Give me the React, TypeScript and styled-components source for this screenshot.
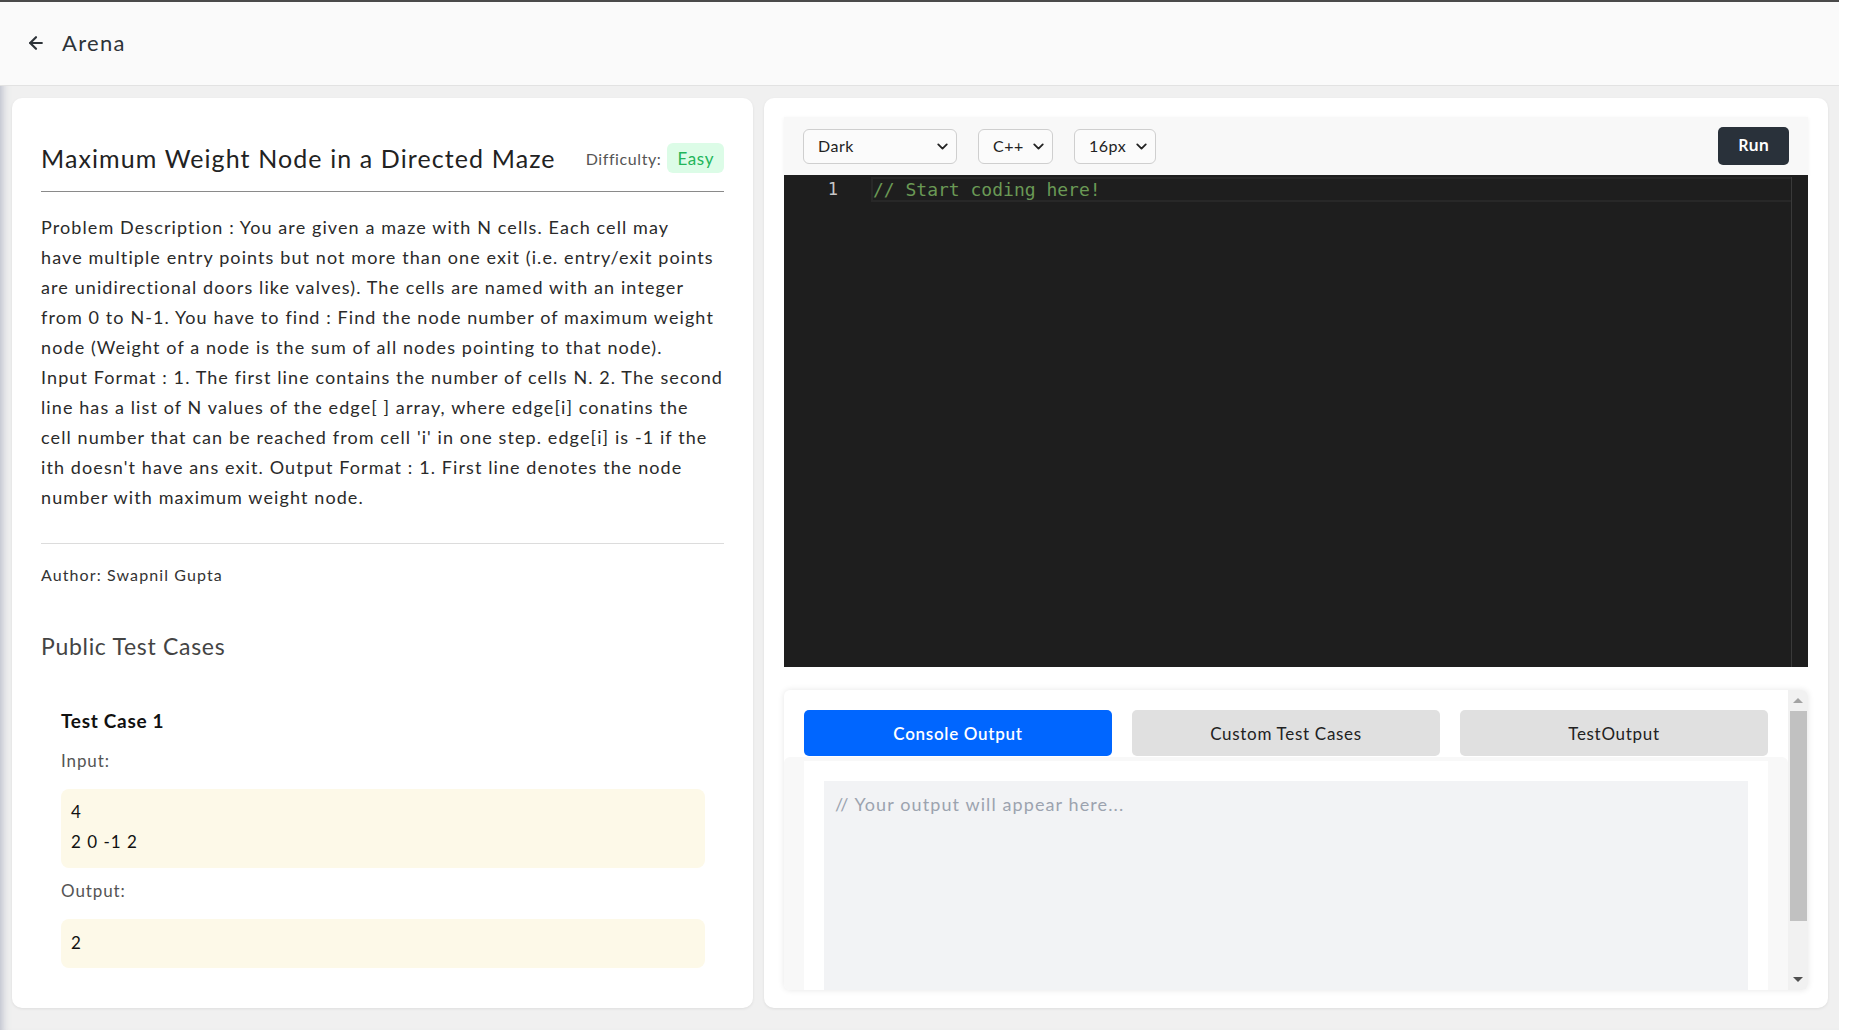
import React from "react";
import styled, { createGlobalStyle } from "styled-components";
import { ArrowLeft, ChevronDown } from "lucide-react";

const SANS = `"Lato", "Noto Sans", sans-serif`;
const MONO = `"DejaVu Sans Mono", "Liberation Mono", monospace`;

const GlobalStyle = createGlobalStyle`
  html, body { margin: 0; padding: 0; background: #ffffff; }
  body { font-family: ${SANS}; color: #222; }
  * { box-sizing: border-box; }
`;

const Page = styled.div`
  width: calc(100% - 10px);
  height: 1030px;
  background: #f0f0f0;
  border-top: 2px solid #4a4a4a;
  box-shadow: inset 10px 0 8px -8px rgba(110, 120, 150, 0.45);
  display: flex;
  flex-direction: column;
  overflow: hidden;
`;

const Header = styled.header`
  height: 84px;
  flex: none;
  background: #fafafa;
  border-bottom: 1px solid #e2e2e2;
  display: flex;
  align-items: center;
  gap: 16px;
  padding-left: 26px;
  padding-bottom: 2px;
  color: #2d3338;
`;

const HeaderTitle = styled.span`
  font-size: 22px;
  letter-spacing: 1.3px;
`;

const Main = styled.main`
  display: flex;
  gap: 11px;
  padding: 12px 11px 0 12px;
`;

const Card = styled.section<{ $w?: number }>`
  ${(p) => (p.$w ? `width: ${p.$w}px; flex: none;` : "flex: 1;")}
  height: 910px;
  background: #ffffff;
  border-radius: 10px;
  box-shadow: 0 1px 3px rgba(0, 0, 0, 0.08);
  display: flex;
  flex-direction: column;
`;

const ProblemCard = styled(Card)`
  padding: 45px 29px 0 29px;
`;

const EditorCard = styled(Card)`
  padding: 19px 20px 18px 20px;
`;

const TitleRow = styled.div`
  display: flex;
  align-items: center;
  justify-content: space-between;
  height: 30px;
`;

const Title = styled.h1`
  margin: 0;
  font-size: 25px;
  font-weight: 400;
  letter-spacing: 1.1px;
  color: #222;
`;

const DifficultyWrap = styled.div`
  display: flex;
  align-items: center;
  gap: 6px;
  font-size: 16px;
  letter-spacing: 0.6px;
  color: #555;
`;

const Badge = styled.span`
  height: 30px;
  display: inline-flex;
  align-items: center;
  padding: 0 10px;
  border-radius: 6px;
  background: #dcfce7;
  color: #22b55a;
  font-size: 17px;
  letter-spacing: 0.6px;
`;

const Divider = styled.hr<{ $dark?: boolean; $mt: number }>`
  margin: ${(p) => p.$mt}px 0 0 0;
  border: none;
  height: 1px;
  background: ${(p) => (p.$dark ? "#8a8a8a" : "#dcdcdc")};
`;

const Description = styled.p`
  margin: 20px 0 0 0;
  font-size: 18px;
  line-height: 30px;
  letter-spacing: 1.1px;
  color: #2a2a2a;
`;

const DescLine = styled.span`
  display: block;
  white-space: nowrap;
`;

const Author = styled.div`
  margin-top: 21px;
  font-size: 16px;
  line-height: 20px;
  letter-spacing: 1.1px;
  color: #333;
`;

const SectionTitle = styled.h2`
  margin: 46px 0 0 0;
  font-size: 23px;
  line-height: 30px;
  font-weight: 400;
  letter-spacing: 0.7px;
  color: #444;
`;

const TestCase = styled.div`
  margin-top: 48px;
  padding: 0 19px 0 20px;
  display: flex;
  flex-direction: column;
`;

const TestCaseTitle = styled.h3`
  margin: 0;
  font-size: 19px;
  line-height: 24px;
  font-weight: 700;
  letter-spacing: 0.7px;
  color: #111;
`;

const IOLabel = styled.div<{ $mt: number }>`
  margin-top: ${(p) => p.$mt}px;
  font-size: 17px;
  line-height: 24px;
  letter-spacing: 0.9px;
  color: #555;
`;

const IOBox = styled.pre<{ $pad: string }>`
  margin: 16px 0 0 0;
  padding: ${(p) => p.$pad};
  background: #fdf9e8;
  border-radius: 8px;
  font-family: ${SANS};
  font-size: 17px;
  line-height: 30px;
  letter-spacing: 1px;
  color: #111;
  white-space: pre-wrap;
`;

const Toolbar = styled.div`
  height: 58px;
  flex: none;
  background: #f8f8f8;
  box-shadow: 0 1px 4px rgba(0, 0, 0, 0.06);
  display: flex;
  align-items: center;
  gap: 21px;
  padding: 0 19px;
`;

const SelectWrap = styled.div<{ $w: number }>`
  position: relative;
  width: ${(p) => p.$w}px;
  height: 35px;
`;

const Select = styled.select`
  appearance: none;
  -webkit-appearance: none;
  width: 100%;
  height: 100%;
  border: 1px solid #cfcfcf;
  border-radius: 6px;
  background: #fbfbfb;
  padding: 0 14px 2px;
  font-family: ${SANS};
  font-size: 16px;
  letter-spacing: 0.5px;
  color: #222;
  outline: none;
`;

const Chevron = styled(ChevronDown)`
  position: absolute;
  right: 6px;
  top: 9px;
  pointer-events: none;
  color: #222;
`;

const RunButton = styled.button`
  margin-left: auto;
  width: 71px;
  height: 38px;
  border: none;
  border-radius: 5px;
  background: #29313a;
  color: #fff;
  font-family: "Noto Sans", "Open Sans", sans-serif;
  font-size: 16px;
  font-weight: 600;
  padding-bottom: 3px;
`;

const Editor = styled.div`
  height: 492px;
  flex: none;
  background: #1e1e1e;
  display: flex;
  padding-top: 2px;
`;

const Gutter = styled.div`
  width: 87px;
  flex: none;
  padding-right: 33px;
  text-align: right;
  font-family: ${MONO};
  font-size: 17px;
  line-height: 25px;
  color: #c6c6c6;
`;

const CodeArea = styled.div`
  flex: 1;
`;

const CodeLine = styled.div`
  height: 25px;
  border: 2px solid #282828;
  border-right: none;
  display: flex;
  align-items: center;
  font-family: ${MONO};
  font-size: 18px;
  color: #6a9955;
  white-space: pre;
`;

const EditorScroll = styled.div`
  width: 17px;
  flex: none;
  border-left: 1px solid #3a3a3a;
`;

const Panel = styled.div`
  margin-top: 23px;
  height: 300px;
  flex: none;
  background: #fff;
  border-radius: 6px;
  box-shadow: 0 0 6px rgba(0, 0, 0, 0.1);
  display: flex;
  overflow: hidden;
`;

const PanelBody = styled.div`
  flex: 1;
  display: flex;
  flex-direction: column;
  padding-top: 20px;
  min-width: 0;
`;

const Tabs = styled.div`
  display: grid;
  grid-template-columns: repeat(3, 1fr);
  gap: 20px;
  padding: 0 20px;
`;

const Tab = styled.button<{ $active?: boolean }>`
  height: 46px;
  border: none;
  border-radius: 5px;
  background: ${(p) => (p.$active ? "#0066ff" : "#e0e0e0")};
  color: ${(p) => (p.$active ? "#ffffff" : "#222")};
  font-family: ${SANS};
  font-size: 17px;
  font-weight: ${(p) => (p.$active ? 600 : 400)};
  letter-spacing: 0.7px;
`;

const OutputArea = styled.div`
  flex: 1;
  margin-top: 1px;
  background: #f8f8f8;
  border-radius: 6px 6px 0 0;
  padding: 4px 20px 0 20px;
  display: flex;
`;

const OutputInner = styled.div`
  flex: 1;
  background: #fff;
  padding: 20px 20px 0 20px;
  display: flex;
`;

const OutputText = styled.textarea`
  flex: 1;
  border: none;
  resize: none;
  outline: none;
  background: #f2f3f5;
  padding: 12px 11px;
  font-family: ${SANS};
  font-size: 18px;
  line-height: 22px;
  letter-spacing: 1.1px;
  color: #333;
  &::placeholder {
    color: #9ca3af;
  }
`;

const Scrollbar = styled.div`
  width: 20px;
  flex: none;
  background: #f1f1f1;
  display: flex;
  flex-direction: column;
  align-items: center;
`;

const ScrollArrow = styled.div<{ $down?: boolean }>`
  height: 21px;
  width: 100%;
  display: flex;
  align-items: center;
  justify-content: center;
  &::after {
    content: "";
    width: 0;
    height: 0;
    border-left: 5px solid transparent;
    border-right: 5px solid transparent;
    ${(p) =>
      p.$down
        ? "border-top: 5px solid #505050;"
        : "border-bottom: 5px solid #a3a3a3;"}
  }
`;

const Thumb = styled.div`
  width: 17px;
  height: 210px;
  background: #c1c1c1;
`;

const Spacer = styled.div`
  flex: 1;
`;

const descriptionLines = [
  "Problem Description : You are given a maze with N cells. Each cell may",
  "have multiple entry points but not more than one exit (i.e. entry/exit points",
  "are unidirectional doors like valves). The cells are named with an integer",
  "from 0 to N-1. You have to find : Find the node number of maximum weight",
  "node (Weight of a node is the sum of all nodes pointing to that node).",
  "Input Format : 1. The first line contains the number of cells N. 2. The second",
  "line has a list of N values of the edge[ ] array, where edge[i] conatins the",
  "cell number that can be reached from cell 'i' in one step. edge[i] is -1 if the",
  "ith doesn't have ans exit. Output Format : 1. First line denotes the node",
  "number with maximum weight node.",
];

export default function App() {
  return (
    <>
      <GlobalStyle />
      <Page>
        <Header>
          <ArrowLeft size={20} strokeWidth={2.6} />
          <HeaderTitle>Arena</HeaderTitle>
        </Header>
        <Main>
          <ProblemCard $w={741}>
            <TitleRow>
              <Title>Maximum Weight Node in a Directed Maze</Title>
              <DifficultyWrap>
                Difficulty:
                <Badge>Easy</Badge>
              </DifficultyWrap>
            </TitleRow>
            <Divider $dark $mt={18} />
            <Description>
              {descriptionLines.map((line) => (
                <DescLine key={line}>{line} </DescLine>
              ))}
            </Description>
            <Divider $mt={31} />
            <Author>Author: Swapnil Gupta</Author>
            <SectionTitle>Public Test Cases</SectionTitle>
            <TestCase>
              <TestCaseTitle>Test Case 1</TestCaseTitle>
              <IOLabel $mt={16}>Input:</IOLabel>
              <IOBox $pad="8px 10px 11px">{"4\n2 0 -1 2"}</IOBox>
              <IOLabel $mt={11}>Output:</IOLabel>
              <IOBox $pad="9px 10px 10px">{"2"}</IOBox>
            </TestCase>
          </ProblemCard>
          <EditorCard>
            <Toolbar>
              <SelectWrap $w={154}>
                <Select defaultValue="dark">
                  <option value="dark">Dark</option>
                  <option value="light">Light</option>
                </Select>
                <Chevron size={17} strokeWidth={2.6} />
              </SelectWrap>
              <SelectWrap $w={75}>
                <Select defaultValue="cpp">
                  <option value="cpp">C++</option>
                  <option value="java">Java</option>
                  <option value="py">Python</option>
                </Select>
                <Chevron size={17} strokeWidth={2.6} />
              </SelectWrap>
              <SelectWrap $w={82}>
                <Select defaultValue="16">
                  <option value="14">14px</option>
                  <option value="16">16px</option>
                  <option value="18">18px</option>
                </Select>
                <Chevron size={17} strokeWidth={2.6} />
              </SelectWrap>
              <RunButton>Run</RunButton>
            </Toolbar>
            <Editor>
              <Gutter>1</Gutter>
              <CodeArea>
                <CodeLine>// Start coding here!</CodeLine>
              </CodeArea>
              <EditorScroll />
            </Editor>
            <Panel>
              <PanelBody>
                <Tabs>
                  <Tab $active>Console Output</Tab>
                  <Tab>Custom Test Cases</Tab>
                  <Tab>TestOutput</Tab>
                </Tabs>
                <OutputArea>
                  <OutputInner>
                    <OutputText readOnly placeholder="// Your output will appear here..." />
                  </OutputInner>
                </OutputArea>
              </PanelBody>
              <Scrollbar>
                <ScrollArrow />
                <Thumb />
                <Spacer />
                <ScrollArrow $down />
              </Scrollbar>
            </Panel>
          </EditorCard>
        </Main>
      </Page>
    </>
  );
}
